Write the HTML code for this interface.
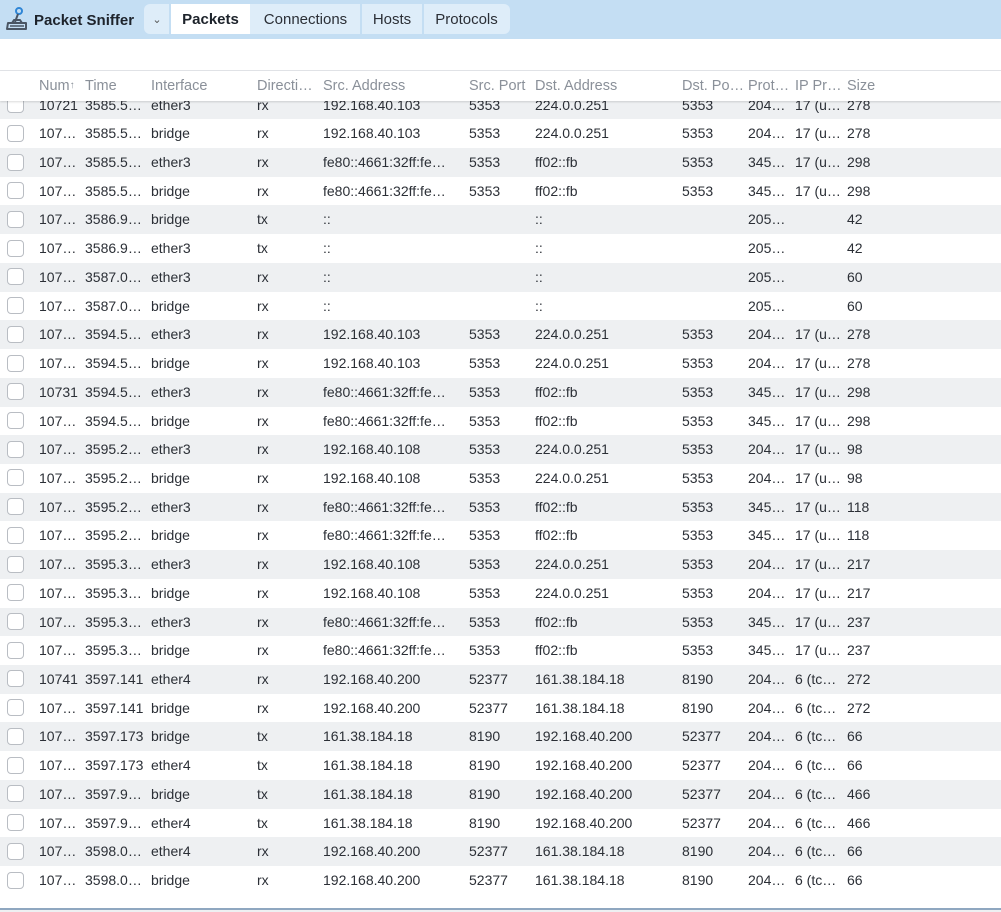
<!DOCTYPE html>
<html><head><meta charset="utf-8"><style>
*{margin:0;padding:0;box-sizing:border-box}
body{width:1001px;height:912px;overflow:hidden;background:#fff;font-family:"Liberation Sans",sans-serif;color:#2b2f36;font-size:14px;position:relative}
.bar{position:absolute;left:0;top:0;width:1001px;height:39px;background:#c4def3}
.title{position:absolute;left:34px;top:12px;font-weight:bold;font-size:15px;color:#1d232b}
.tabs{position:absolute;left:144px;top:4px;height:30px;width:366px;background:#deedf9;border-radius:6px}
.tab{position:absolute;top:0;height:30px;line-height:32px;font-size:15px;color:#2b2f36;text-align:center}
.sep{position:absolute;top:0;width:2px;height:30px;background:#c4def3}
.hline{position:absolute;left:0;top:70px;width:1001px;height:1px;background:#e3e5e8}
.head{position:absolute;left:0;top:71px;width:1001px;height:30px;background:#fff;z-index:2;box-shadow:0 1px 2px rgba(0,0,0,.15);color:#8a9099;font-size:14.5px}
.head span,.r span{position:absolute;white-space:nowrap}
.head span{top:7px}
.body{position:absolute;left:0;top:101px;width:1001px;height:807px;overflow:hidden}
.rows{position:absolute;left:0;top:-10.4px;width:1001px}
.r{position:relative;height:28.73px;line-height:28.73px}
.r.g{background:#eef0f2}
.cb{position:absolute;left:7px;top:5.5px;width:17px;height:17px;border:1px solid #b9bdc3;border-radius:4px;background:#fff}
.c1{left:39px}.c2{left:85px}.c3{left:151px}.c4{left:257px}.c5{left:323px}.c6{left:469px}.c7{left:535px}.c8{left:682px}.c9{left:748px}.c10{left:795px}.c11{left:847px}
.foot{position:absolute;left:0;top:908px;width:1001px;height:2px;background:#8fa7c0}
.foot2{position:absolute;left:0;top:910px;width:1001px;height:2px;background:#eef0f2}
</style></head><body>
<div class="bar">
<svg style="position:absolute;left:5px;top:6px" width="24" height="26" viewBox="0 0 24 26"><circle cx="14" cy="5" r="3" fill="none" stroke="#2f86d6" stroke-width="2"/><path d="M13 8 L10 16" stroke="#4a5563" stroke-width="2"/><path d="M3 17 H21 V23 H2 Z M7 17 L9 14 H15 L17 17" fill="none" stroke="#4a5563" stroke-width="2" stroke-linejoin="round"/><path d="M5 20 H19" stroke="#4a5563" stroke-width="1.5"/></svg>
<div class="title">Packet Sniffer</div>
<div class="tabs">
<div class="tab" style="left:0;width:26px;font-size:11px;color:#555">&#8964;</div>
<div class="sep" style="left:25px"></div>
<div class="tab" style="left:27px;width:79px;background:#fff;font-weight:bold;color:#1d232b">Packets</div>
<div class="tab" style="left:107px;width:109px">Connections</div>
<div class="sep" style="left:216px"></div>
<div class="tab" style="left:218px;width:60px">Hosts</div>
<div class="sep" style="left:278px"></div>
<div class="tab" style="left:280px;width:85px">Protocols</div>
</div>
</div>
<div class="hline"></div>
<div class="head"><span class="c1">Num<span style="position:relative;font-size:10px;top:-2px">&#8593;</span></span><span class="c2">Time</span><span class="c3">Interface</span><span class="c4">Directi…</span><span class="c5">Src. Address</span><span class="c6">Src. Port</span><span class="c7">Dst. Address</span><span class="c8">Dst. Po…</span><span class="c9">Prot…</span><span class="c10">IP Pr…</span><span class="c11">Size</span></div>
<div class="body"><div class="rows">
<div class="r g"><i class="cb"></i><span class="c1">10721</span><span class="c2">3585.5…</span><span class="c3">ether3</span><span class="c4">rx</span><span class="c5">192.168.40.103</span><span class="c6">5353</span><span class="c7">224.0.0.251</span><span class="c8">5353</span><span class="c9">204…</span><span class="c10">17 (u…</span><span class="c11">278</span></div>
<div class="r"><i class="cb"></i><span class="c1">107…</span><span class="c2">3585.5…</span><span class="c3">bridge</span><span class="c4">rx</span><span class="c5">192.168.40.103</span><span class="c6">5353</span><span class="c7">224.0.0.251</span><span class="c8">5353</span><span class="c9">204…</span><span class="c10">17 (u…</span><span class="c11">278</span></div>
<div class="r g"><i class="cb"></i><span class="c1">107…</span><span class="c2">3585.5…</span><span class="c3">ether3</span><span class="c4">rx</span><span class="c5">fe80::4661:32ff:fe…</span><span class="c6">5353</span><span class="c7">ff02::fb</span><span class="c8">5353</span><span class="c9">345…</span><span class="c10">17 (u…</span><span class="c11">298</span></div>
<div class="r"><i class="cb"></i><span class="c1">107…</span><span class="c2">3585.5…</span><span class="c3">bridge</span><span class="c4">rx</span><span class="c5">fe80::4661:32ff:fe…</span><span class="c6">5353</span><span class="c7">ff02::fb</span><span class="c8">5353</span><span class="c9">345…</span><span class="c10">17 (u…</span><span class="c11">298</span></div>
<div class="r g"><i class="cb"></i><span class="c1">107…</span><span class="c2">3586.9…</span><span class="c3">bridge</span><span class="c4">tx</span><span class="c5">::</span><span class="c7">::</span><span class="c9">205…</span><span class="c11">42</span></div>
<div class="r"><i class="cb"></i><span class="c1">107…</span><span class="c2">3586.9…</span><span class="c3">ether3</span><span class="c4">tx</span><span class="c5">::</span><span class="c7">::</span><span class="c9">205…</span><span class="c11">42</span></div>
<div class="r g"><i class="cb"></i><span class="c1">107…</span><span class="c2">3587.0…</span><span class="c3">ether3</span><span class="c4">rx</span><span class="c5">::</span><span class="c7">::</span><span class="c9">205…</span><span class="c11">60</span></div>
<div class="r"><i class="cb"></i><span class="c1">107…</span><span class="c2">3587.0…</span><span class="c3">bridge</span><span class="c4">rx</span><span class="c5">::</span><span class="c7">::</span><span class="c9">205…</span><span class="c11">60</span></div>
<div class="r g"><i class="cb"></i><span class="c1">107…</span><span class="c2">3594.5…</span><span class="c3">ether3</span><span class="c4">rx</span><span class="c5">192.168.40.103</span><span class="c6">5353</span><span class="c7">224.0.0.251</span><span class="c8">5353</span><span class="c9">204…</span><span class="c10">17 (u…</span><span class="c11">278</span></div>
<div class="r"><i class="cb"></i><span class="c1">107…</span><span class="c2">3594.5…</span><span class="c3">bridge</span><span class="c4">rx</span><span class="c5">192.168.40.103</span><span class="c6">5353</span><span class="c7">224.0.0.251</span><span class="c8">5353</span><span class="c9">204…</span><span class="c10">17 (u…</span><span class="c11">278</span></div>
<div class="r g"><i class="cb"></i><span class="c1">10731</span><span class="c2">3594.5…</span><span class="c3">ether3</span><span class="c4">rx</span><span class="c5">fe80::4661:32ff:fe…</span><span class="c6">5353</span><span class="c7">ff02::fb</span><span class="c8">5353</span><span class="c9">345…</span><span class="c10">17 (u…</span><span class="c11">298</span></div>
<div class="r"><i class="cb"></i><span class="c1">107…</span><span class="c2">3594.5…</span><span class="c3">bridge</span><span class="c4">rx</span><span class="c5">fe80::4661:32ff:fe…</span><span class="c6">5353</span><span class="c7">ff02::fb</span><span class="c8">5353</span><span class="c9">345…</span><span class="c10">17 (u…</span><span class="c11">298</span></div>
<div class="r g"><i class="cb"></i><span class="c1">107…</span><span class="c2">3595.2…</span><span class="c3">ether3</span><span class="c4">rx</span><span class="c5">192.168.40.108</span><span class="c6">5353</span><span class="c7">224.0.0.251</span><span class="c8">5353</span><span class="c9">204…</span><span class="c10">17 (u…</span><span class="c11">98</span></div>
<div class="r"><i class="cb"></i><span class="c1">107…</span><span class="c2">3595.2…</span><span class="c3">bridge</span><span class="c4">rx</span><span class="c5">192.168.40.108</span><span class="c6">5353</span><span class="c7">224.0.0.251</span><span class="c8">5353</span><span class="c9">204…</span><span class="c10">17 (u…</span><span class="c11">98</span></div>
<div class="r g"><i class="cb"></i><span class="c1">107…</span><span class="c2">3595.2…</span><span class="c3">ether3</span><span class="c4">rx</span><span class="c5">fe80::4661:32ff:fe…</span><span class="c6">5353</span><span class="c7">ff02::fb</span><span class="c8">5353</span><span class="c9">345…</span><span class="c10">17 (u…</span><span class="c11">118</span></div>
<div class="r"><i class="cb"></i><span class="c1">107…</span><span class="c2">3595.2…</span><span class="c3">bridge</span><span class="c4">rx</span><span class="c5">fe80::4661:32ff:fe…</span><span class="c6">5353</span><span class="c7">ff02::fb</span><span class="c8">5353</span><span class="c9">345…</span><span class="c10">17 (u…</span><span class="c11">118</span></div>
<div class="r g"><i class="cb"></i><span class="c1">107…</span><span class="c2">3595.3…</span><span class="c3">ether3</span><span class="c4">rx</span><span class="c5">192.168.40.108</span><span class="c6">5353</span><span class="c7">224.0.0.251</span><span class="c8">5353</span><span class="c9">204…</span><span class="c10">17 (u…</span><span class="c11">217</span></div>
<div class="r"><i class="cb"></i><span class="c1">107…</span><span class="c2">3595.3…</span><span class="c3">bridge</span><span class="c4">rx</span><span class="c5">192.168.40.108</span><span class="c6">5353</span><span class="c7">224.0.0.251</span><span class="c8">5353</span><span class="c9">204…</span><span class="c10">17 (u…</span><span class="c11">217</span></div>
<div class="r g"><i class="cb"></i><span class="c1">107…</span><span class="c2">3595.3…</span><span class="c3">ether3</span><span class="c4">rx</span><span class="c5">fe80::4661:32ff:fe…</span><span class="c6">5353</span><span class="c7">ff02::fb</span><span class="c8">5353</span><span class="c9">345…</span><span class="c10">17 (u…</span><span class="c11">237</span></div>
<div class="r"><i class="cb"></i><span class="c1">107…</span><span class="c2">3595.3…</span><span class="c3">bridge</span><span class="c4">rx</span><span class="c5">fe80::4661:32ff:fe…</span><span class="c6">5353</span><span class="c7">ff02::fb</span><span class="c8">5353</span><span class="c9">345…</span><span class="c10">17 (u…</span><span class="c11">237</span></div>
<div class="r g"><i class="cb"></i><span class="c1">10741</span><span class="c2">3597.141</span><span class="c3">ether4</span><span class="c4">rx</span><span class="c5">192.168.40.200</span><span class="c6">52377</span><span class="c7">161.38.184.18</span><span class="c8">8190</span><span class="c9">204…</span><span class="c10">6 (tc…</span><span class="c11">272</span></div>
<div class="r"><i class="cb"></i><span class="c1">107…</span><span class="c2">3597.141</span><span class="c3">bridge</span><span class="c4">rx</span><span class="c5">192.168.40.200</span><span class="c6">52377</span><span class="c7">161.38.184.18</span><span class="c8">8190</span><span class="c9">204…</span><span class="c10">6 (tc…</span><span class="c11">272</span></div>
<div class="r g"><i class="cb"></i><span class="c1">107…</span><span class="c2">3597.173</span><span class="c3">bridge</span><span class="c4">tx</span><span class="c5">161.38.184.18</span><span class="c6">8190</span><span class="c7">192.168.40.200</span><span class="c8">52377</span><span class="c9">204…</span><span class="c10">6 (tc…</span><span class="c11">66</span></div>
<div class="r"><i class="cb"></i><span class="c1">107…</span><span class="c2">3597.173</span><span class="c3">ether4</span><span class="c4">tx</span><span class="c5">161.38.184.18</span><span class="c6">8190</span><span class="c7">192.168.40.200</span><span class="c8">52377</span><span class="c9">204…</span><span class="c10">6 (tc…</span><span class="c11">66</span></div>
<div class="r g"><i class="cb"></i><span class="c1">107…</span><span class="c2">3597.9…</span><span class="c3">bridge</span><span class="c4">tx</span><span class="c5">161.38.184.18</span><span class="c6">8190</span><span class="c7">192.168.40.200</span><span class="c8">52377</span><span class="c9">204…</span><span class="c10">6 (tc…</span><span class="c11">466</span></div>
<div class="r"><i class="cb"></i><span class="c1">107…</span><span class="c2">3597.9…</span><span class="c3">ether4</span><span class="c4">tx</span><span class="c5">161.38.184.18</span><span class="c6">8190</span><span class="c7">192.168.40.200</span><span class="c8">52377</span><span class="c9">204…</span><span class="c10">6 (tc…</span><span class="c11">466</span></div>
<div class="r g"><i class="cb"></i><span class="c1">107…</span><span class="c2">3598.0…</span><span class="c3">ether4</span><span class="c4">rx</span><span class="c5">192.168.40.200</span><span class="c6">52377</span><span class="c7">161.38.184.18</span><span class="c8">8190</span><span class="c9">204…</span><span class="c10">6 (tc…</span><span class="c11">66</span></div>
<div class="r"><i class="cb"></i><span class="c1">107…</span><span class="c2">3598.0…</span><span class="c3">bridge</span><span class="c4">rx</span><span class="c5">192.168.40.200</span><span class="c6">52377</span><span class="c7">161.38.184.18</span><span class="c8">8190</span><span class="c9">204…</span><span class="c10">6 (tc…</span><span class="c11">66</span></div>
</div></div>
<div class="foot"></div><div class="foot2"></div>
</body></html>
